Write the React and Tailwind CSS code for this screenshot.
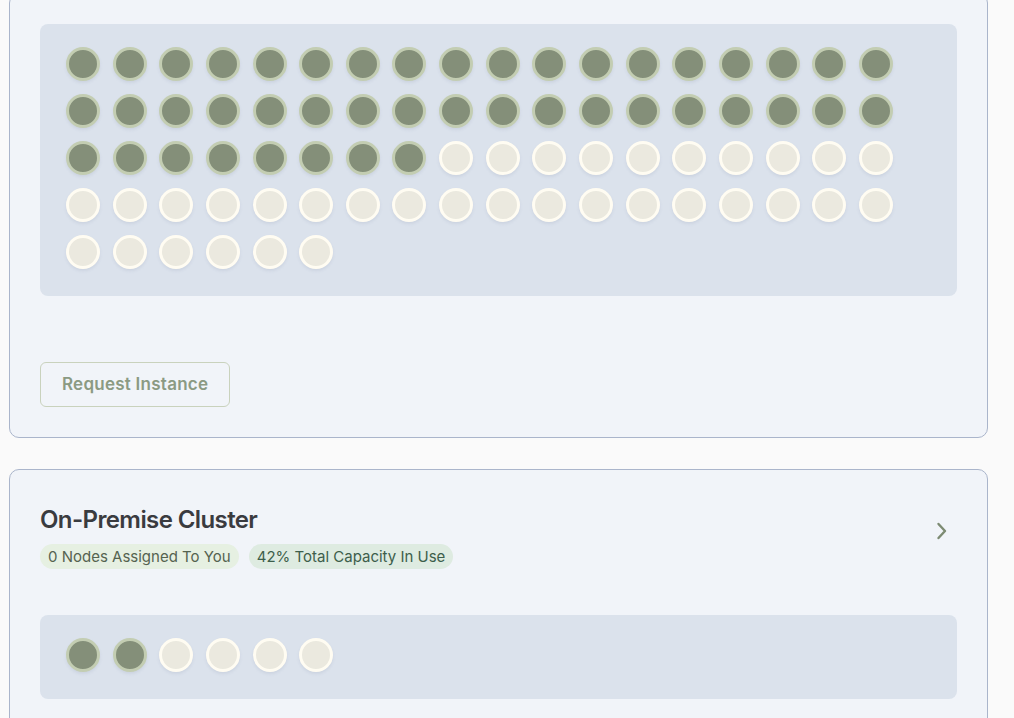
import React from 'react';

const font = { fontFamily: 'Inter, "Noto Sans", sans-serif' };

const Node = ({ used }) => (
  <div
    className={
      used
        ? 'w-[34px] h-[34px] rounded-full bg-[#848f79] border-[3px] border-[#c3cdb2] shadow-[0_2px_3px_rgba(140,150,180,0.18)]'
        : 'w-[34px] h-[34px] rounded-full bg-[#ebe9df] border-[3px] border-[#fffcf2] shadow-[0_2px_3px_rgba(140,150,180,0.18)]'
    }
  />
);

const NodeGrid = ({ total, used }) => (
  <div className="bg-[#dbe2ec] rounded-lg pl-[26px] pr-[26px] pt-[23px] pb-[27px] flex flex-wrap gap-x-[12.65px] gap-y-[13px]">
    {Array.from({ length: total }).map((_, i) => (
      <Node key={i} used={i < used} />
    ))}
  </div>
);

const Chevron = () => (
  <svg width="12" height="18" viewBox="0 0 12 18" fill="none">
    <path d="M2.5 2 L9 9 L2.5 16" stroke="#7d8b73" strokeWidth="2.4" strokeLinecap="round" strokeLinejoin="round" />
  </svg>
);

export default function App() {
  return (
    <div className="min-h-screen bg-[#fafafa] overflow-hidden" style={font}>
      <div className="ml-[9px] w-[979px] -mt-[7px] flex flex-col gap-[31px]">
        <div className="bg-[#f1f4f9] border border-[#aab5cb] rounded-[10px] p-[30px]">
          <NodeGrid total={78} used={44} />
          <button className="mt-[66px] h-[45px] px-[21px] rounded-md border border-[#c9d2bd] text-[#8b9a83] text-[17px] tracking-[0.25px] font-semibold">
            Request Instance
          </button>
        </div>

        <div className="bg-[#f1f4f9] border border-[#aab5cb] rounded-[10px] px-[30px] pt-[34px] pb-[30px]">
          <div className="flex items-start justify-between">
            <div>
              <h2 className="text-[24px] leading-[32px] font-semibold text-[#3a3b3f] tracking-[-0.6px]">
                On-Premise Cluster
              </h2>
              <div className="mt-[8px] flex gap-[10px]">
                <span className="h-[25px] px-[8px] rounded-full bg-[#e6f0e2] text-[#556350] text-[15px] leading-[25px]">
                  0 Nodes Assigned To You
                </span>
                <span className="h-[25px] px-[8px] rounded-full bg-[#deebe1] text-[#3d5e4b] text-[15px] leading-[25px]">
                  42% Total Capacity In Use
                </span>
              </div>
            </div>
            <div className="mr-[9px] mt-[18px]">
              <Chevron />
            </div>
          </div>
          <div className="mt-[46px]">
            <NodeGrid total={6} used={2} />
          </div>
        </div>
      </div>
    </div>
  );
}
